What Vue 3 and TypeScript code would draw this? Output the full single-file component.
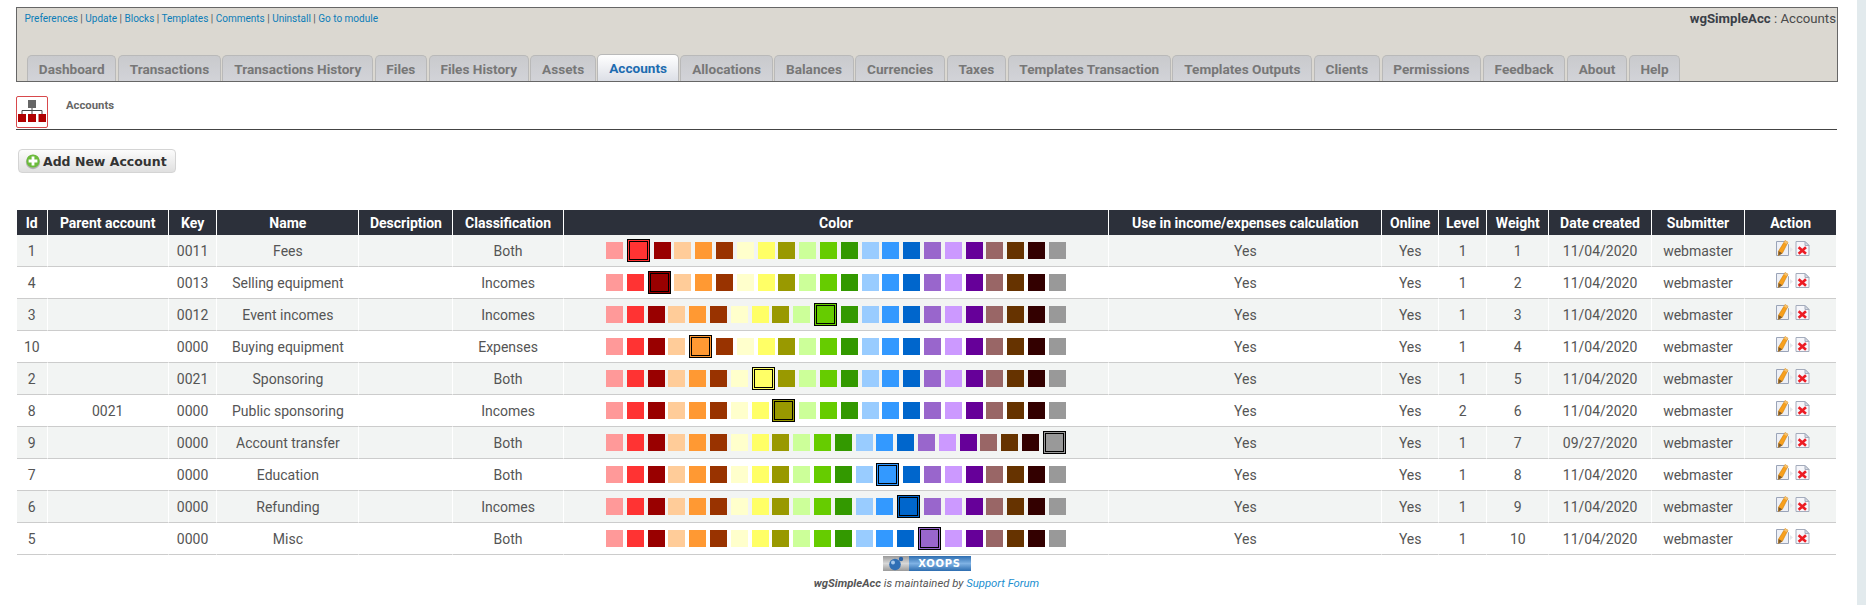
<script setup lang="ts">
const tabs: string[] = ['Dashboard','Transactions','Transactions History','Files','Files History','Assets','Accounts','Allocations','Balances','Currencies','Taxes','Templates Transaction','Templates Outputs','Clients','Permissions','Feedback','About','Help']
const links: string[] = ['Preferences','Update','Blocks','Templates','Comments','Uninstall','Go to module']
const heads: string[] = ['Id','Parent account','Key','Name','Description','Classification','Color','Use in income/expenses calculation','Online','Level','Weight','Date created','Submitter','Action']
const colors: string[] = ['#FF9999','#FF3333','#990000','#FFCC99','#FF9933','#993300','#FFFFCC','#FFFF66','#999900','#CCFF99','#66CC00','#339900','#99CCFF','#3399FF','#0066CC','#9966CC','#CC99FF','#660099','#996666','#663300','#330000','#999999']
interface Row { id: number; parent: string; key: string; name: string; cls: string; sel: number; level: number; weight: number; date: string }
const rows: Row[] = [
  { id: 1, parent: '', key: '0011', name: 'Fees', cls: 'Both', sel: 1, level: 1, weight: 1, date: '11/04/2020' },
  { id: 4, parent: '', key: '0013', name: 'Selling equipment', cls: 'Incomes', sel: 2, level: 1, weight: 2, date: '11/04/2020' },
  { id: 3, parent: '', key: '0012', name: 'Event incomes', cls: 'Incomes', sel: 10, level: 1, weight: 3, date: '11/04/2020' },
  { id: 10, parent: '', key: '0000', name: 'Buying equipment', cls: 'Expenses', sel: 4, level: 1, weight: 4, date: '11/04/2020' },
  { id: 2, parent: '', key: '0021', name: 'Sponsoring', cls: 'Both', sel: 7, level: 1, weight: 5, date: '11/04/2020' },
  { id: 8, parent: '0021', key: '0000', name: 'Public sponsoring', cls: 'Incomes', sel: 8, level: 2, weight: 6, date: '11/04/2020' },
  { id: 9, parent: '', key: '0000', name: 'Account transfer', cls: 'Both', sel: 21, level: 1, weight: 7, date: '09/27/2020' },
  { id: 7, parent: '', key: '0000', name: 'Education', cls: 'Both', sel: 13, level: 1, weight: 8, date: '11/04/2020' },
  { id: 6, parent: '', key: '0000', name: 'Refunding', cls: 'Incomes', sel: 14, level: 1, weight: 9, date: '11/04/2020' },
  { id: 5, parent: '', key: '0000', name: 'Misc', cls: 'Both', sel: 15, level: 1, weight: 10, date: '11/04/2020' },
]
</script>

<template>
  <div class="page">
    <main class="main">
      <header class="adminbar">
        <div class="toprow">
          <nav class="links">
            <template v-for="(l, i) in links" :key="l">
              <span v-if="i > 0" class="pipe"> | </span><a class="lnk">{{ l }}</a>
            </template>
          </nav>
          <div class="crumb"><b>wgSimpleAcc</b> : Accounts</div>
        </div>
        <ul class="tabs">
          <li v-for="t in tabs" :key="t" class="tab" :class="{ active: t === 'Accounts' }">{{ t }}</li>
        </ul>
      </header>

      <div class="heading">
        <span class="hicon">
          <svg width="30" height="30" viewBox="0 0 30 30">
            <rect x="11" y="3" width="8" height="8" fill="#666" />
            <path d="M15 11v6M5 17v-3.5h20v3.5" fill="none" stroke="#444" stroke-width="1" />
            <rect x="1" y="17" width="8" height="8" fill="#b00000" />
            <rect x="11" y="17" width="8" height="8" fill="#b00000" />
            <rect x="21.5" y="17" width="7.5" height="8" fill="#b00000" />
          </svg>
        </span>
        <span class="htitle">Accounts</span>
      </div>

      <button class="addbtn" type="button">
        <svg width="16" height="17" viewBox="0 0 16 17">
          <circle cx="8" cy="9" r="7.2" fill="#888" opacity=".55" />
          <circle cx="8" cy="8" r="6.6" fill="#6cbb3c" />
          <path d="M8 3.6v8.8M3.6 8h8.8" stroke="#fff" stroke-width="2.8" />
        </svg>
        <span>Add New Account</span>
      </button>

      <table class="grid">
        <thead>
          <tr><th v-for="h in heads" :key="h">{{ h }}</th></tr>
        </thead>
        <tbody>
          <tr v-for="r in rows" :key="r.id">
            <td>{{ r.id }}</td>
            <td>{{ r.parent }}</td>
            <td>{{ r.key }}</td>
            <td>{{ r.name }}</td>
            <td></td>
            <td>{{ r.cls }}</td>
            <td>
              <div class="swatches">
                <span v-for="(c, i) in colors" :key="c" class="sw" :class="{ sel: i === r.sel }" :style="{ backgroundColor: c }"></span>
              </div>
            </td>
            <td>Yes</td>
            <td>Yes</td>
            <td>{{ r.level }}</td>
            <td>{{ r.weight }}</td>
            <td>{{ r.date }}</td>
            <td>webmaster</td>
            <td>
              <div class="actions">
                <svg width="20" height="17" viewBox="0 0 20 17">
                  <path d="M1.5 1.5h9l3 3v11h-12z" fill="#eef0f6" stroke="#9aa4b8" />
                  <path d="M15 7l3 2.5-3 2.5z" fill="#e4e6ea" />
                  <path d="M10 .6l3 1.6-5.6 11-4 2.3.1-4.4z" fill="#f7a01e" stroke="#c87800" stroke-width=".5" />
                  <path d="M10 .6l3 1.6-1 2-3-1.6z" fill="#f3c070" />
                  <path d="M3.5 11.1l3.9 2.1-4 2.3z" fill="#7a5a30" />
                </svg>
                <svg width="15" height="17" viewBox="0 0 15 17">
                  <path d="M1 1.5h9l4 4v10h-13z" fill="#f6f6fa" stroke="#a4acbc" />
                  <path d="M10 1.5v4h4z" fill="#d8dce6" stroke="#a4acbc" />
                  <path d="M3.6 7.2l7.4 6.6M11 7.2l-7.4 6.6" stroke="#ec1c24" stroke-width="2.6" />
                </svg>
              </div>
            </td>
          </tr>
        </tbody>
      </table>

      <footer class="foot">
        <div class="badge">
          <span class="bleft">
            <svg width="20" height="15" viewBox="0 0 20 15">
              <circle cx="9" cy="8.5" r="5.8" fill="#2f6fb5" />
              <circle cx="7" cy="6.5" r="2" fill="#a4c8ec" />
              <circle cx="15" cy="3" r="2.2" fill="#2a62a6" />
            </svg>
          </span>
          <span class="bright">XOOPS</span>
        </div>
        <p class="maint"><b>wgSimpleAcc</b> is maintained by <a class="lnk2">Support Forum</a></p>
      </footer>
    </main>
    <aside class="strip"></aside>
  </div>
</template>

<style>
html, body { margin: 0; background: #fff; overflow: hidden; }
</style>

<style scoped>
.page { display: flex; height: 605px; overflow: hidden; font-family: Roboto, "Liberation Sans", sans-serif; color: #555; background: #fff; }
.main { flex: 1; min-width: 0; padding: 7px 19px 0 16px; box-sizing: border-box; }
.strip { width: 9px; background: #e2eaed; }

.adminbar { height: 75px; box-sizing: border-box; border: 1px solid #666; background: #dbd8d1; display: flex; flex-direction: column; justify-content: space-between; }
.toprow { display: flex; justify-content: space-between; padding: 3px 1px 0 7.5px; line-height: 15px; }
.links { font-size: 10px; color: #0b7db8; }
.lnk { color: #0b7db8; }
.pipe { color: #555; }
.crumb { font-size: 13.2px; color: #4a4a4a; }
.crumb b { color: #3a3f48; }
.tabs { list-style: none; margin: 0; padding: 0 0 0 10px; display: flex; gap: 1.5px; }
.tab { height: 26px; line-height: 27px; padding: 0 10.8px; box-sizing: border-box; border: 1px solid #b9b9b9; border-bottom: 0; border-radius: 5px 5px 0 0; background: linear-gradient(#c9cacd, #d2d3d8); color: #777; font-size: 13.6px; font-weight: 700; white-space: nowrap; }
.tab.active { background: linear-gradient(#fff, #dcdfe6); color: #1d6cb0; height: 27px; margin-top: -1px; }

.heading { display: flex; height: 34px; margin-top: 14px; border-bottom: 1px solid #444; box-sizing: border-box; margin-right: 1px; }
.hicon { width: 30px; height: 30px; border: 1px solid #d8494c; border-radius: 2px; display: block; background: #fff; }
.htitle { margin: 2px 0 0 18px; font-size: 11.3px; font-weight: 700; color: #666; line-height: 15px; }

.addbtn { display: flex; align-items: center; gap: 2px; margin: 19px 0 0 2px; height: 24px; width: 158px; padding: 0 0 0 6px; box-sizing: border-box; border: 1px solid #d4d4d4; border-radius: 4px; background: linear-gradient(#fcfcfc, #e0e0e0); font-family: "DejaVu Sans", sans-serif; font-size: 12.5px; font-weight: 700; color: #333; }

.grid { table-layout: fixed; border-collapse: separate; border-spacing: 0; width: 1819px; margin: 37px 0 0 1px; font-size: 14px; }
.grid th { height: 25px; padding: 0; background: #2c303a; color: #fff; font-size: 14px; font-weight: 700; border-right: 1px solid #fff; text-align: center; white-space: nowrap; box-sizing: border-box; }
.grid th:last-child, .grid td:last-child { border-right: 0; }
.grid td { height: 32px; padding: 0; text-align: center; border-right: 1px solid #fff; border-bottom: 1px solid #ccc; box-sizing: border-box; color: #555; white-space: nowrap; }
.grid tbody tr:nth-child(odd) td { background: #f2f4f3; }
.grid th:nth-child(1) { width: 30.5px; }
.grid th:nth-child(2) { width: 121.3px; }
.grid th:nth-child(3) { width: 48.6px; }
.grid th:nth-child(4) { width: 142px; }
.grid th:nth-child(5) { width: 94.1px; }
.grid th:nth-child(6) { width: 110.2px; }
.grid th:nth-child(7) { width: 545.6px; }
.grid th:nth-child(8) { width: 273.2px; }
.grid th:nth-child(9) { width: 56.5px; }
.grid th:nth-child(10) { width: 48.3px; }
.grid th:nth-child(11) { width: 62.1px; }
.grid th:nth-child(12) { width: 102.4px; }
.grid th:nth-child(13) { width: 93.5px; }

.swatches { display: flex; justify-content: center; align-items: center; gap: 3.8px; height: 31px; }
.sw { width: 17px; height: 17px; flex: none; }
.sw.sel { box-sizing: content-box; border: 3px double #000; }

.actions { display: flex; justify-content: center; align-items: flex-start; gap: 0; margin-top: -4px; padding-left: 4px; }

.foot { display: flex; flex-direction: column; align-items: center; margin-top: 1px; margin-right: 1px; }
.badge { display: flex; width: 88px; height: 15px; }
.bleft { width: 26px; background: linear-gradient(#9a9a9a, #d8d8d8 50%, #9a9a9a); display: flex; align-items: center; justify-content: center; }
.bright { flex: 1; background: linear-gradient(#2d6db0, #7fb2e4 50%, #2d6db0); color: #fff; font-family: "DejaVu Sans", sans-serif; font-size: 10px; font-weight: 700; text-align: center; line-height: 15px; letter-spacing: .7px; }
.maint { margin: 6px 0 0; font-size: 11.3px; font-style: italic; line-height: 13px; color: #555; }
.lnk2 { color: #1c8fd0; }
</style>
